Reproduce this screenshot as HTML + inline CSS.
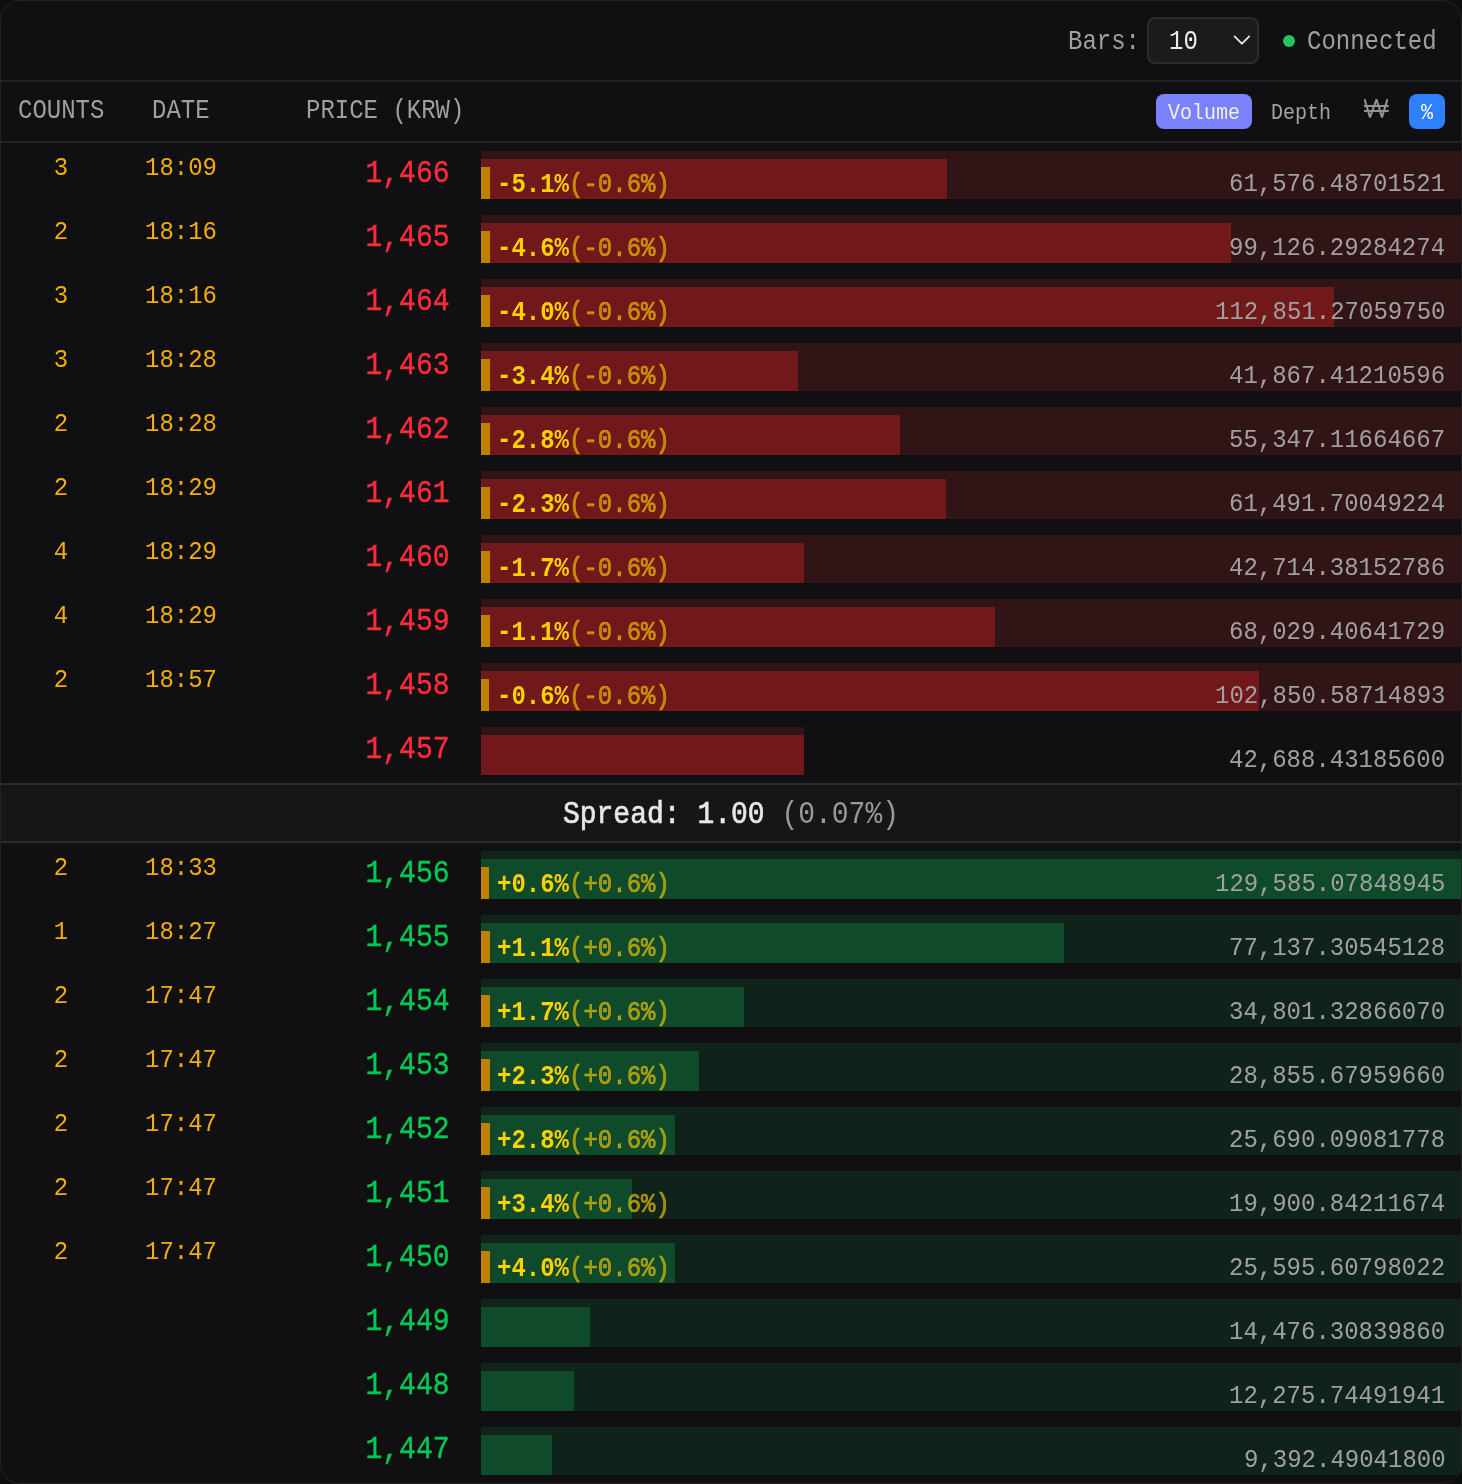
<!DOCTYPE html>
<html><head><meta charset="utf-8">
<style>
html,body{margin:0;padding:0;background:#0d0e10;}
body{width:1462px;height:1484px;overflow:hidden;position:relative;font-family:"Liberation Mono",monospace;}
.box{position:absolute;left:0;top:0;width:1462px;height:1484px;border-radius:20px;background:#101012;overflow:hidden;}
.frame{position:absolute;left:0;top:0;width:1462px;height:1484px;box-sizing:border-box;border:1px solid #232323;border-radius:20px;}
.t{position:absolute;white-space:pre;transform:scaleY(1.138);transform-origin:0 0;line-height:1;will-change:transform;}
.hline{position:absolute;left:0;width:1462px;height:2px;background:#232323;}
.sline{position:absolute;left:0;width:1462px;height:2px;background:#2a2c28;}
.hdr{font-size:24px;color:#a09f9c;}
.sel{position:absolute;left:1147px;top:17px;width:112px;height:47px;box-sizing:border-box;border:2px solid #2b2d29;border-radius:8px;background:#1b1b1d;}
.dot{position:absolute;left:1283px;top:35px;width:12px;height:12px;border-radius:50%;background:#22c55e;}
.btn{position:absolute;top:94px;height:35px;border-radius:8px;}
.btxt{font-size:20px;}
.spread{position:absolute;left:0;top:785px;width:1462px;height:56px;background:#151618;}
.sptxt{left:0;width:1462px;text-align:center;font-size:28px;color:#e8e8e8;}
.sptxt b{font-weight:normal;-webkit-text-stroke:0.6px #e8e8e8;}
.sptxt span{color:#9a9a9a;}
.band{position:absolute;left:481px;height:48px;}
.band.ask{background:#311416;}
.band.bid{background:#10231a;}
.bar{position:absolute;left:481px;height:40px;}
.bar.ask{background:#71181a;}
.bar.bid{background:#0f4b2a;}
.mk{position:absolute;left:481px;width:9px;height:32px;background:#c08000;}
.pct{left:497px;font-size:24px;}
.pct b{color:#fdd000;font-weight:bold;}
.pct span{color:rgba(250,204,0,0.6);-webkit-text-stroke:0.6px rgba(250,204,0,0.6);}
.cnt{left:0;width:122px;text-align:center;font-size:24px;color:#f2ac0e;transform:scaleY(1.1);}
.dt{left:121px;width:120px;text-align:center;font-size:24px;color:#f2ac0e;transform:scaleY(1.1);}
.price{left:200px;width:249.5px;text-align:right;font-size:28px;}
.price.ask{color:#ff2b3c;-webkit-text-stroke:0.4px #ff2b3c;}
.price.bid{color:#05c853;-webkit-text-stroke:0.4px #05c853;}
.vol{right:16.5px;font-size:24px;color:#a0a0a0;text-align:right;transform:scaleY(1.1);}
</style></head><body>
<div class="box">
<div class="hline" style="top:80px"></div>
<div class="t hdr" style="left:1068px;top:29px">Bars:</div>
<div class="sel"></div>
<div class="t hdr" style="left:1169px;top:29px;color:#ececec">10</div>
<svg style="position:absolute;left:1231px;top:33px" width="22" height="14" viewBox="0 0 22 14"><path d="M3.1 2.9 L10.9 10.7 L18.7 2.9" fill="none" stroke="#e8e8e8" stroke-width="1.7"/></svg>
<div class="dot"></div>
<div class="t hdr" style="left:1307px;top:29px">Connected</div>

<div class="t hdr" style="left:18px;top:98px">COUNTS</div>
<div class="t hdr" style="left:152px;top:98px">DATE</div>
<div class="t hdr" style="left:306px;top:98px">PRICE (KRW)</div>
<div class="btn" style="left:1156px;width:96px;background:#7c82fc"></div>
<div class="t btxt" style="left:1168px;top:102px;color:#f0f0ea">Volume</div>
<div class="t btxt" style="left:1271px;top:102px;color:#a3a3a3">Depth</div>
<svg style="position:absolute;left:1362px;top:97px" width="30" height="24" viewBox="0 0 30 24"><path d="M2.6 2.2 L8 20.4 L14.5 2.4 L20 20.4 L25.4 2.2" fill="none" stroke="#939393" stroke-width="2" stroke-linejoin="bevel"/><path d="M2 8.9 H26.7 M2 13.9 H26.7" stroke="#939393" stroke-width="2"/></svg>
<div class="btn" style="left:1409px;width:36px;background:#2f80ff"></div>
<div class="t btxt" style="left:1421px;top:102px;color:#ffffff">%</div>
<div class="hline" style="top:141px"></div>

<div class="band ask" style="top:151px;width:980.00px"></div>
<div class="bar ask" style="top:159px;width:465.68px"></div>
<div class="mk" style="top:167px;width:9px"></div>
<div class="t pct" style="top:172px"><b>-5.1%</b><span>(-0.6%)</span></div>
<div class="t cnt" style="top:155px">3</div>
<div class="t dt" style="top:155px">18:09</div>
<div class="t price ask" style="top:158px">1,466</div>
<div class="t vol" style="top:171px">61,576.48701521</div>
<div class="band ask" style="top:215px;width:980.00px"></div>
<div class="bar ask" style="top:223px;width:749.65px"></div>
<div class="mk" style="top:231px;width:9px"></div>
<div class="t pct" style="top:236px"><b>-4.6%</b><span>(-0.6%)</span></div>
<div class="t cnt" style="top:219px">2</div>
<div class="t dt" style="top:219px">18:16</div>
<div class="t price ask" style="top:222px">1,465</div>
<div class="t vol" style="top:235px">99,126.29284274</div>
<div class="band ask" style="top:279px;width:980.00px"></div>
<div class="bar ask" style="top:287px;width:853.45px"></div>
<div class="mk" style="top:295px;width:9px"></div>
<div class="t pct" style="top:300px"><b>-4.0%</b><span>(-0.6%)</span></div>
<div class="t cnt" style="top:283px">3</div>
<div class="t dt" style="top:283px">18:16</div>
<div class="t price ask" style="top:286px">1,464</div>
<div class="t vol" style="top:299px">112,851.27059750</div>
<div class="band ask" style="top:343px;width:980.00px"></div>
<div class="bar ask" style="top:351px;width:316.63px"></div>
<div class="mk" style="top:359px;width:9px"></div>
<div class="t pct" style="top:364px"><b>-3.4%</b><span>(-0.6%)</span></div>
<div class="t cnt" style="top:347px">3</div>
<div class="t dt" style="top:347px">18:28</div>
<div class="t price ask" style="top:350px">1,463</div>
<div class="t vol" style="top:363px">41,867.41210596</div>
<div class="band ask" style="top:407px;width:980.00px"></div>
<div class="bar ask" style="top:415px;width:418.57px"></div>
<div class="mk" style="top:423px;width:9px"></div>
<div class="t pct" style="top:428px"><b>-2.8%</b><span>(-0.6%)</span></div>
<div class="t cnt" style="top:411px">2</div>
<div class="t dt" style="top:411px">18:28</div>
<div class="t price ask" style="top:414px">1,462</div>
<div class="t vol" style="top:427px">55,347.11664667</div>
<div class="band ask" style="top:471px;width:980.00px"></div>
<div class="bar ask" style="top:479px;width:465.04px"></div>
<div class="mk" style="top:487px;width:9px"></div>
<div class="t pct" style="top:492px"><b>-2.3%</b><span>(-0.6%)</span></div>
<div class="t cnt" style="top:475px">2</div>
<div class="t dt" style="top:475px">18:29</div>
<div class="t price ask" style="top:478px">1,461</div>
<div class="t vol" style="top:491px">61,491.70049224</div>
<div class="band ask" style="top:535px;width:980.00px"></div>
<div class="bar ask" style="top:543px;width:323.03px"></div>
<div class="mk" style="top:551px;width:9px"></div>
<div class="t pct" style="top:556px"><b>-1.7%</b><span>(-0.6%)</span></div>
<div class="t cnt" style="top:539px">4</div>
<div class="t dt" style="top:539px">18:29</div>
<div class="t price ask" style="top:542px">1,460</div>
<div class="t vol" style="top:555px">42,714.38152786</div>
<div class="band ask" style="top:599px;width:980.00px"></div>
<div class="bar ask" style="top:607px;width:514.48px"></div>
<div class="mk" style="top:615px;width:9px"></div>
<div class="t pct" style="top:620px"><b>-1.1%</b><span>(-0.6%)</span></div>
<div class="t cnt" style="top:603px">4</div>
<div class="t dt" style="top:603px">18:29</div>
<div class="t price ask" style="top:606px">1,459</div>
<div class="t vol" style="top:619px">68,029.40641729</div>
<div class="band ask" style="top:663px;width:980.00px"></div>
<div class="bar ask" style="top:671px;width:777.82px"></div>
<div class="mk" style="top:679px;width:8px"></div>
<div class="t pct" style="top:684px"><b>-0.6%</b><span>(-0.6%)</span></div>
<div class="t cnt" style="top:667px">2</div>
<div class="t dt" style="top:667px">18:57</div>
<div class="t price ask" style="top:670px">1,458</div>
<div class="t vol" style="top:683px">102,850.58714893</div>
<div class="band ask" style="top:727px;width:322.84px"></div>
<div class="bar ask" style="top:735px;width:322.84px"></div>
<div class="t price ask" style="top:734px">1,457</div>
<div class="t vol" style="top:747px">42,688.43185600</div>

<div class="sline" style="top:783px"></div>
<div class="spread"></div>
<div class="sline" style="top:841px"></div>
<div class="t sptxt" style="top:799px"><b>Spread: 1.00</b> <span>(0.07%)</span></div>

<div class="band bid" style="top:851px;width:980.00px"></div>
<div class="bar bid" style="top:859px;width:980.00px"></div>
<div class="mk" style="top:867px;width:8px"></div>
<div class="t pct" style="top:872px"><b>+0.6%</b><span>(+0.6%)</span></div>
<div class="t cnt" style="top:855px">2</div>
<div class="t dt" style="top:855px">18:33</div>
<div class="t price bid" style="top:858px">1,456</div>
<div class="t vol" style="top:871px">129,585.07848945</div>
<div class="band bid" style="top:915px;width:980.00px"></div>
<div class="bar bid" style="top:923px;width:583.36px"></div>
<div class="mk" style="top:931px;width:9px"></div>
<div class="t pct" style="top:936px"><b>+1.1%</b><span>(+0.6%)</span></div>
<div class="t cnt" style="top:919px">1</div>
<div class="t dt" style="top:919px">18:27</div>
<div class="t price bid" style="top:922px">1,455</div>
<div class="t vol" style="top:935px">77,137.30545128</div>
<div class="band bid" style="top:979px;width:980.00px"></div>
<div class="bar bid" style="top:987px;width:263.19px"></div>
<div class="mk" style="top:995px;width:9px"></div>
<div class="t pct" style="top:1000px"><b>+1.7%</b><span>(+0.6%)</span></div>
<div class="t cnt" style="top:983px">2</div>
<div class="t dt" style="top:983px">17:47</div>
<div class="t price bid" style="top:986px">1,454</div>
<div class="t vol" style="top:999px">34,801.32866070</div>
<div class="band bid" style="top:1043px;width:980.00px"></div>
<div class="bar bid" style="top:1051px;width:218.22px"></div>
<div class="mk" style="top:1059px;width:9px"></div>
<div class="t pct" style="top:1064px"><b>+2.3%</b><span>(+0.6%)</span></div>
<div class="t cnt" style="top:1047px">2</div>
<div class="t dt" style="top:1047px">17:47</div>
<div class="t price bid" style="top:1050px">1,453</div>
<div class="t vol" style="top:1063px">28,855.67959660</div>
<div class="band bid" style="top:1107px;width:980.00px"></div>
<div class="bar bid" style="top:1115px;width:194.28px"></div>
<div class="mk" style="top:1123px;width:9px"></div>
<div class="t pct" style="top:1128px"><b>+2.8%</b><span>(+0.6%)</span></div>
<div class="t cnt" style="top:1111px">2</div>
<div class="t dt" style="top:1111px">17:47</div>
<div class="t price bid" style="top:1114px">1,452</div>
<div class="t vol" style="top:1127px">25,690.09081778</div>
<div class="band bid" style="top:1171px;width:980.00px"></div>
<div class="bar bid" style="top:1179px;width:150.50px"></div>
<div class="mk" style="top:1187px;width:9px"></div>
<div class="t pct" style="top:1192px"><b>+3.4%</b><span>(+0.6%)</span></div>
<div class="t cnt" style="top:1175px">2</div>
<div class="t dt" style="top:1175px">17:47</div>
<div class="t price bid" style="top:1178px">1,451</div>
<div class="t vol" style="top:1191px">19,900.84211674</div>
<div class="band bid" style="top:1235px;width:980.00px"></div>
<div class="bar bid" style="top:1243px;width:193.57px"></div>
<div class="mk" style="top:1251px;width:9px"></div>
<div class="t pct" style="top:1256px"><b>+4.0%</b><span>(+0.6%)</span></div>
<div class="t cnt" style="top:1239px">2</div>
<div class="t dt" style="top:1239px">17:47</div>
<div class="t price bid" style="top:1242px">1,450</div>
<div class="t vol" style="top:1255px">25,595.60798022</div>
<div class="band bid" style="top:1299px;width:980.00px"></div>
<div class="bar bid" style="top:1307px;width:109.48px"></div>
<div class="t price bid" style="top:1306px">1,449</div>
<div class="t vol" style="top:1319px">14,476.30839860</div>
<div class="band bid" style="top:1363px;width:980.00px"></div>
<div class="bar bid" style="top:1371px;width:92.84px"></div>
<div class="t price bid" style="top:1370px">1,448</div>
<div class="t vol" style="top:1383px">12,275.74491941</div>
<div class="band bid" style="top:1427px;width:980.00px"></div>
<div class="bar bid" style="top:1435px;width:71.03px"></div>
<div class="t price bid" style="top:1434px">1,447</div>
<div class="t vol" style="top:1447px">9,392.49041800</div>
</div>
<div class="frame"></div>
</body></html>
